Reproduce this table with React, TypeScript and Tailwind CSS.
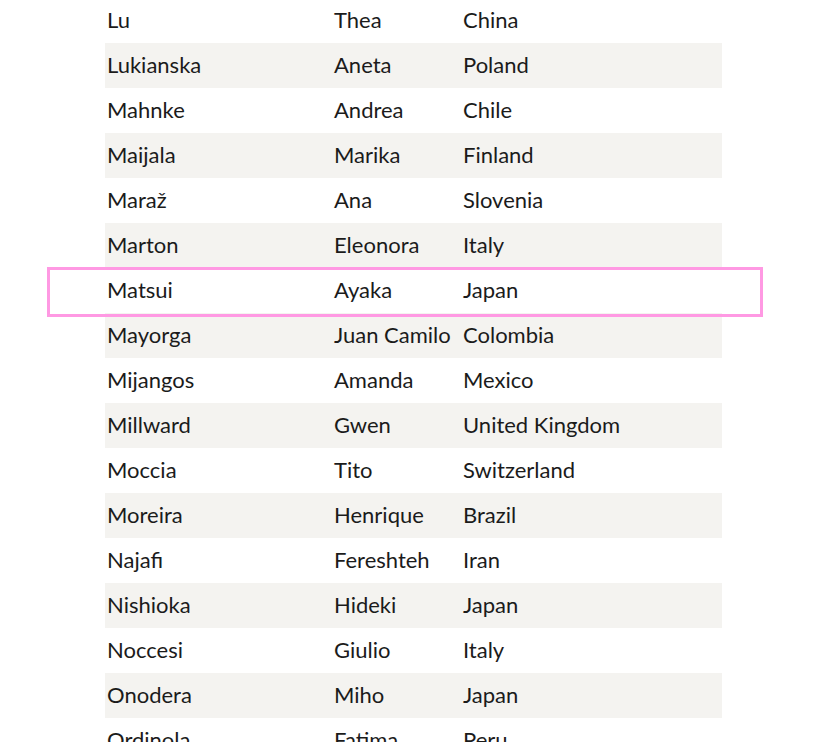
const ROWS: [string, string, string][] = [
  ["Lu", "Thea", "China"],
  ["Lukianska", "Aneta", "Poland"],
  ["Mahnke", "Andrea", "Chile"],
  ["Maijala", "Marika", "Finland"],
  ["Maraž", "Ana", "Slovenia"],
  ["Marton", "Eleonora", "Italy"],
  ["Matsui", "Ayaka", "Japan"],
  ["Mayorga", "Juan Camilo", "Colombia"],
  ["Mijangos", "Amanda", "Mexico"],
  ["Millward", "Gwen", "United Kingdom"],
  ["Moccia", "Tito", "Switzerland"],
  ["Moreira", "Henrique", "Brazil"],
  ["Najafi", "Fereshteh", "Iran"],
  ["Nishioka", "Hideki", "Japan"],
  ["Noccesi", "Giulio", "Italy"],
  ["Onodera", "Miho", "Japan"],
  ["Ordinola", "Fatima", "Peru"],
];

export default function App() {
  return (
    <div
      className="h-[742px] w-[820px] overflow-hidden bg-white text-[#1b1b1b]"
      style={{ fontFamily: '"Lato", "Liberation Sans", sans-serif' }}
    >
      <div className="-mt-[2px] ml-[105px] w-[617px]">
        {ROWS.map(([last, first, country], i) => (
          <div
            key={last}
            className={
              "relative grid h-[45px] grid-cols-[227px_129px_1fr] items-center whitespace-nowrap pb-[2px] text-[22px] " +
              (i % 2 === 1 ? "bg-[#f4f3f0]" : "")
            }
          >
            <span className="pl-[2px]">{last}</span>
            <span className="pl-[2px]">{first}</span>
            <span className="pl-[2px]">{country}</span>
            {last === "Matsui" ? (
              <div className="pointer-events-none absolute left-[-58px] top-[-1px] z-10 h-[50px] w-[716px] border-[3px] border-[#ff99e3]" />
            ) : null}
          </div>
        ))}
      </div>
    </div>
  );
}
